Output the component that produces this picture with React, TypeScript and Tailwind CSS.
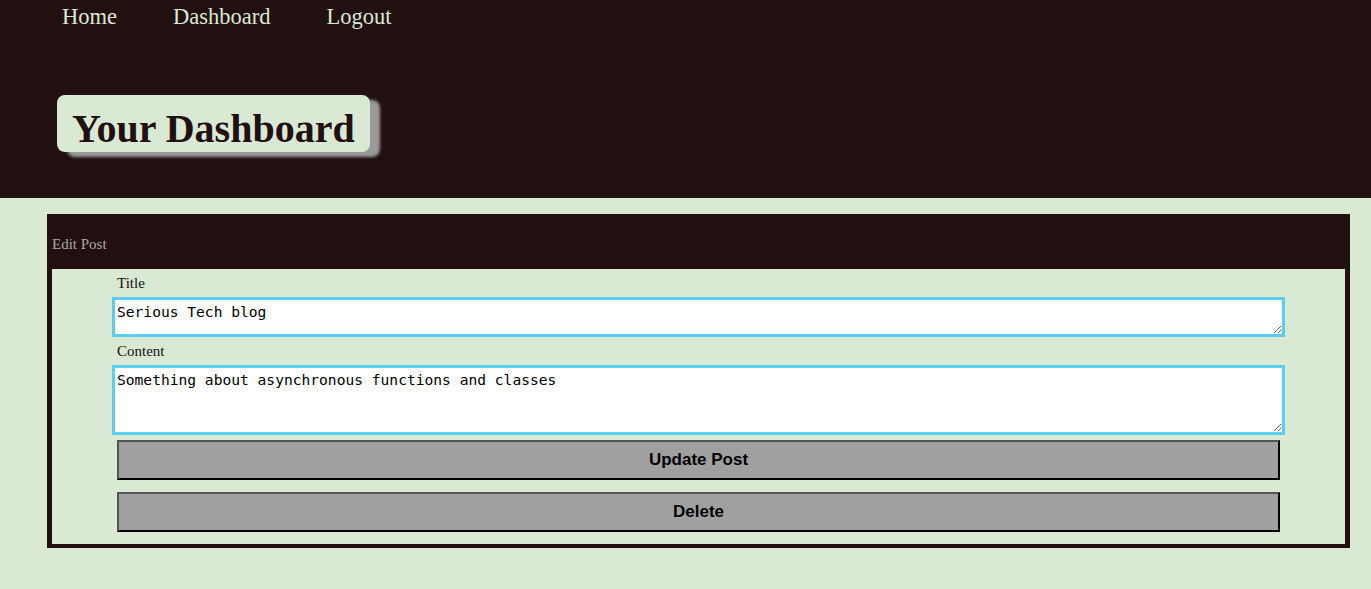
export default function App() {
  return (
    <div className="min-h-[589px] bg-[#d9e9d3] font-['Liberation_Serif',serif]">
      <header className="h-[198px] bg-[#221011]">
        <nav className="flex gap-[56px] pl-[62px] pt-[4px] text-[22.5px] leading-[26px] text-[#d9e9d3]">
          <a href="#">Home</a>
          <a href="#">Dashboard</a>
          <a href="#">Logout</a>
        </nav>
        <div className="pl-[57px] pt-[65px]">
          <h1 className="inline-flex h-[57px] items-center rounded-[8px] bg-[#d9e9d3] px-[15px] pt-[10px] text-[40px] font-bold leading-none text-[#221011] shadow-[10px_5px_3px_#9a9a9a]">
            Your Dashboard
          </h1>
        </div>
      </header>

      <main className="px-[47px] pt-[16px]">
        <section className="w-[1303px] bg-[#221011] px-[5px] pb-[4px]">
          <div className="h-[55px] pt-[21px] text-[15px] leading-[18px] text-[#a9a9a3]">Edit Post</div>
          <form className="bg-[#d9e9d3] px-[60px] pt-[5px] pb-[12px]">
            <label className="block pl-[5px] text-[15px] leading-[18px] text-[#111]">Title</label>
            <textarea
              defaultValue="Serious Tech blog"
              className="mt-[5px] block h-[40px] w-full border-[3px] border-[#5bcdf2] bg-white px-[2px] pt-[2px] pb-0 font-['DejaVu_Sans_Mono',monospace] text-[14.6px] leading-[20px] text-black outline-none"
            />
            <label className="mt-[5px] block pl-[5px] text-[15px] leading-[18px] text-[#111]">Content</label>
            <textarea
              defaultValue="Something about asynchronous functions and classes"
              className="mt-[5px] block h-[70px] w-full border-[3px] border-[#5bcdf2] bg-white px-[2px] pt-[2px] pb-0 font-['DejaVu_Sans_Mono',monospace] text-[14.6px] leading-[20px] text-black outline-none"
            />
            <div className="flex flex-col gap-[12px] px-[5px] pt-[5px]">
              <button type="button" className="h-[40px] w-full border-2 border-t-[#555] border-l-[#555] border-r-black border-b-black bg-[#a0a0a0] font-['Liberation_Sans',sans-serif] text-[17px] font-bold text-black">
                Update Post
              </button>
              <button type="button" className="h-[40px] w-full border-2 border-t-[#555] border-l-[#555] border-r-black border-b-black bg-[#a0a0a0] font-['Liberation_Sans',sans-serif] text-[17px] font-bold text-black">
                Delete
              </button>
            </div>
          </form>
        </section>
      </main>
    </div>
  );
}
